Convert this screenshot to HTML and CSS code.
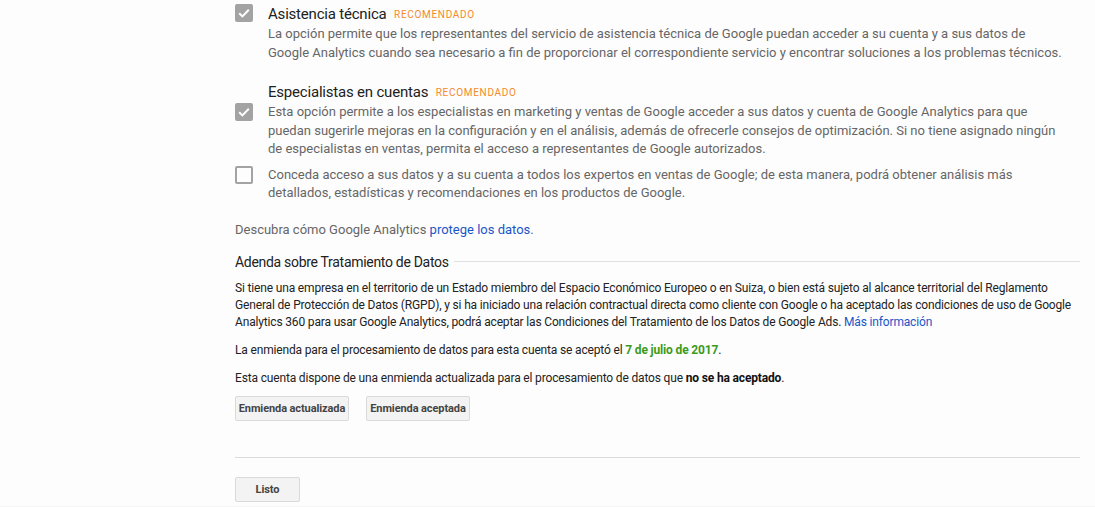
FILE: index.html
```html
<!DOCTYPE html>
<html lang="es">
<head>
<meta charset="utf-8">
<title>Configuración de uso compartido de datos</title>
<link rel="stylesheet" href="styles.css">
</head>
<body>
<main class="page">
  <div class="option option-first">
    <span class="cb cb-checked"><svg viewBox="0 0 18 18" width="18" height="18"><path d="M4.2 9.3l3.2 3.1 6.4-6.6" fill="none" stroke="#fff" stroke-width="2"/></svg></span>
    <div class="option-body">
      <div class="option-title">Asistencia técnica <span class="badge">RECOMENDADO</span></div>
      <p class="option-desc">La opción permite que los representantes del servicio de asistencia técnica de Google puedan acceder a su cuenta y a sus datos de Google Analytics cuando sea necesario a fin de proporcionar el correspondiente servicio y encontrar soluciones a los problemas técnicos.</p>
    </div>
  </div>

  <div class="group">
    <div class="option-title group-title">Especialistas en cuentas <span class="badge">RECOMENDADO</span></div>
    <div class="option">
      <span class="cb cb-checked"><svg viewBox="0 0 18 18" width="18" height="18"><path d="M4.2 9.3l3.2 3.1 6.4-6.6" fill="none" stroke="#fff" stroke-width="2"/></svg></span>
      <p class="option-desc">Esta opción permite a los especialistas en marketing y ventas de Google acceder a sus datos y cuenta de Google Analytics para que puedan sugerirle mejoras en la configuración y en el análisis, además de ofrecerle consejos de optimización. Si no tiene asignado ningún de especialistas en ventas, permita el acceso a representantes de Google autorizados.</p>
    </div>
    <div class="option option-sub">
      <span class="cb"></span>
      <p class="option-desc">Conceda acceso a sus datos y a su cuenta a todos los expertos en ventas de Google; de esta manera, podrá obtener análisis más detallados, estadísticas y recomendaciones en los productos de Google.</p>
    </div>
  </div>

  <p class="discover">Descubra cómo Google Analytics <a href="#" class="link">protege los datos</a>.</p>

  <div class="section-head">
    <h2 class="section-title">Adenda sobre Tratamiento de Datos</h2>
    <span class="section-rule"></span>
  </div>

  <p class="small first-small">Si tiene una empresa en el territorio de un Estado miembro del Espacio Económico Europeo o en Suiza, o bien está sujeto al alcance territorial del Reglamento General de Protección de Datos (RGPD), y si ha iniciado una relación contractual directa como cliente con Google o ha aceptado las condiciones de uso de Google Analytics 360 para usar Google Analytics, podrá aceptar las Condiciones del Tratamiento de los Datos de Google Ads. <a href="#" class="link">Más información</a></p>

  <p class="small gap">La enmienda para el procesamiento de datos para esta cuenta se aceptó el <strong class="ok">7 de julio de 2017</strong>.</p>

  <p class="small gap">Esta cuenta dispone de una enmienda actualizada para el procesamiento de datos que <strong>no se ha aceptado</strong>.</p>

  <div class="buttons">
    <button class="btn btn-a">Enmienda actualizada</button>
    <button class="btn btn-b">Enmienda aceptada</button>
  </div>

  <hr class="rule">

  <button class="btn btn-done">Listo</button>
</main>
<div class="footer-band"></div>
</body>
</html>
```

FILE: styles.css
```css
html, body {
  margin: 0;
  padding: 0;
  background: #fdfdfd;
  font-family: Roboto, "Liberation Sans", Arial, sans-serif;
  overflow: hidden;
}

.page {
  margin-left: 235px;
  width: 845px;
  padding-top: 4px;
}

p { margin: 0; }

.option {
  display: flex;
  align-items: flex-start;
}

.cb {
  flex: 0 0 18px;
  width: 18px;
  height: 18px;
  box-sizing: border-box;
  border: 2px solid #a3a3a3;
  border-radius: 2px;
  margin-right: 15px;
  display: flex;
  align-items: center;
  justify-content: center;
}

.cb svg { display: block; margin: -2px; }

.cb-checked {
  background: #a3a3a3;
}

.option-body { flex: 1; }

.option-title {
  font-size: 15px;
  line-height: 20px;
  color: #212121;
  letter-spacing: -0.2px;
}

.group-title {
  margin-left: 33px;
  margin-top: 20px;
}

.badge {
  font-size: 10px;
  letter-spacing: 0.7px;
  color: #f48a2a;
  margin-left: 4px;
  vertical-align: 1px;
}

.option-desc {
  font-size: 13px;
  line-height: 18.5px;
  color: #666;
  max-width: 798px;
  flex: 1;
}

.option-sub { margin-top: 7px; }

.discover {
  margin-top: 18px;
  font-size: 13px;
  line-height: 18px;
  color: #666;
}

.link {
  color: #1a55c8;
  text-decoration: none;
}

.section-head {
  display: flex;
  align-items: center;
  margin-top: 13px;
}

.section-title {
  margin: 0;
  font-size: 14px;
  line-height: 20px;
  font-weight: 400;
  color: #212121;
  letter-spacing: -0.3px;
}

.section-rule {
  flex: 1;
  height: 1px;
  background: #e0e0e0;
  margin-left: 5px;
}

.small {
  font-size: 12px;
  line-height: 17px;
  color: #222;
  letter-spacing: -0.16px;
}

.first-small { margin-top: 8px; }

.small strong {
  font-weight: 700;
  color: #111;
}

.small .ok { color: #3a9a1c; }

.gap { margin-top: 11px; }

.buttons {
  display: flex;
  gap: 17px;
  margin-top: 9px;
}

.btn {
  font-family: Roboto, "Liberation Sans", Arial, sans-serif;
  font-size: 11px;
  font-weight: 700;
  color: #444;
  background: #f3f3f3;
  border: 1px solid #dadada;
  border-radius: 2px;
  height: 25px;
  padding: 0;
  box-sizing: border-box;
  white-space: nowrap;
  letter-spacing: -0.1px;
}

.btn-a { width: 114px; }
.btn-b { width: 104px; }

.rule {
  margin: 36px 0 0;
  border: 0;
  height: 1px;
  background: #dcdcdc;
}

.btn-done {
  display: block;
  width: 65px;
  margin-top: 19px;
}

.footer-band {
  margin-top: 4px;
  height: 10px;
  background: #f4f4f4;
}
```
